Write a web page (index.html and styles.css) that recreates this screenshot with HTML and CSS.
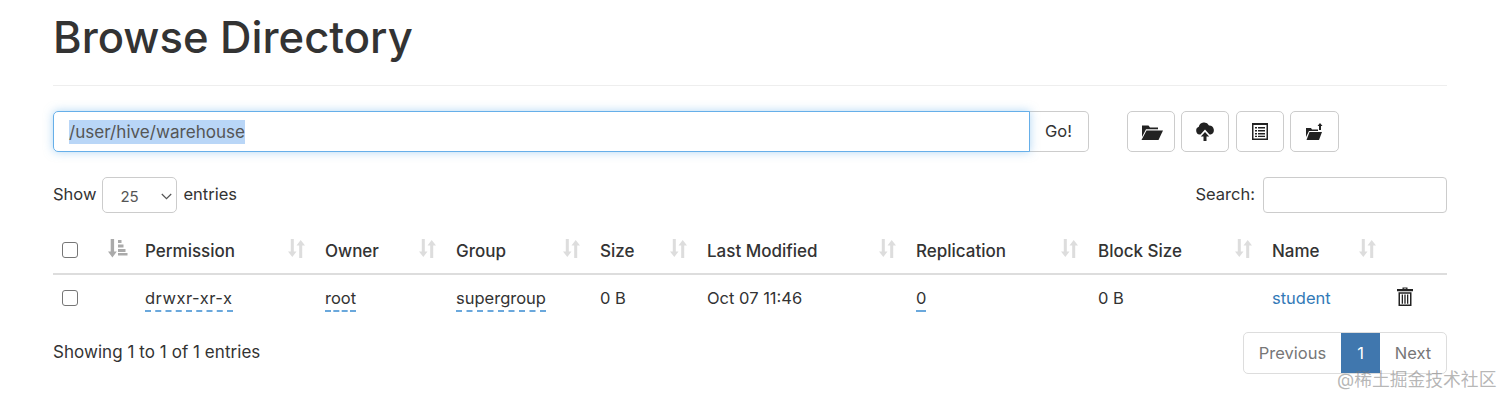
FILE: index.html
```html
<!DOCTYPE html>
<html lang="en">
<head>
<meta charset="utf-8">
<title>Browse Directory</title>
<link rel="stylesheet" href="styles.css">
</head>
<body>
<main class="page">
  <header class="page-header"><h1>Browse Directory</h1></header>

  <div class="toolbar">
    <div class="path-group">
      <div class="path-input"><span class="selected">/user/hive/warehouse</span></div>
      <button class="btn go">Go!</button>
    </div>
    <div class="actions">
      <button class="btn icon-btn w48">
        <svg class="ic nudge" width="22" height="16" viewBox="0 0 22 16"><path d="M1 1.500h6.500l1.500 2H17v1.800H5L1 13z"/><path d="M5.500 6.500H22L17.500 16H0.500z"/></svg>
      </button>
      <button class="btn icon-btn w48">
        <svg class="ic" width="20" height="19" viewBox="0 0 20 19"><path d="M4.500 12.500A4 4 0 0 1 3.800 4.800 5.500 5.500 0 0 1 14 3.400 4.700 4.700 0 0 1 15.800 12.500H14.500L10 7.500 5.500 12.500z"/><path d="M10 10l4.200 4.500H11.500V19h-3v-4.500H5.800z"/></svg>
      </button>
      <button class="btn icon-btn w48 shift">
        <svg class="ic" width="16" height="17" viewBox="0 0 16 17"><path fill-rule="evenodd" d="M0 0h16v17H0zM1.500 2v13.500h13V2z"/><path d="M3 4h2v1.500H3zM6 4h7v1.500H6zM3 7h2v1.500H3zM6 7h7v1.500H6zM3 10h2v1.500H3zM6 10h7v1.500H6zM3 12.800h2v1.200H3zM6 12.800h7v1.200H6z"/></svg>
      </button>
      <button class="btn icon-btn w49">
        <svg class="ic" width="19" height="17" viewBox="0 0 19 17"><path d="M1 5h5l1 1.500h6V8H4L1 14z"/><path d="M4.500 9H17l-3 8H1.500z"/><path d="M15 0l2.500 3H16v4h-2V3h-1.500z"/></svg>
      </button>
    </div>
  </div>

  <div class="controls">
    <div class="length">
      <span>Show</span>
      <div class="select"><span>25</span>
        <svg class="chev" width="11" height="7" viewBox="0 0 11 7"><path d="M0.800 1l4.700 4.700L10.200 1"/></svg>
      </div>
      <span>entries</span>
    </div>
    <div class="search">
      <span>Search:</span>
      <div class="search-input"></div>
    </div>
  </div>

  <table class="grid">
    <thead>
      <tr>
        <th class="c-check"><span class="box"></span>
          <svg class="sort active" width="20" height="19" viewBox="0 0 20 19"><path d="M2.700 0h3.400v12.500h2.700L4.400 18.500 0 12.500h2.700z"/><path d="M10 1h3.500v3H10zM10 5.500h5.500v3H10zM10 10h7.500v3H10zM10 14h9.500v2.500H10z"/></svg>
        </th>
        <th class="c-perm">Permission<svg class="sort" width="17" height="19" viewBox="0 0 17 19"><path d="M2.800 0h3v12.500h2.700L4.300 18 0 12.500h2.800zM11.200 19h3V6.500H17L12.700 1 8.500 6.500h2.700z"/></svg></th>
        <th class="c-owner">Owner<svg class="sort" width="17" height="19" viewBox="0 0 17 19"><path d="M2.800 0h3v12.500h2.700L4.300 18 0 12.500h2.800zM11.200 19h3V6.500H17L12.700 1 8.500 6.500h2.700z"/></svg></th>
        <th class="c-group">Group<svg class="sort" width="17" height="19" viewBox="0 0 17 19"><path d="M2.800 0h3v12.500h2.700L4.300 18 0 12.500h2.800zM11.200 19h3V6.500H17L12.700 1 8.500 6.500h2.700z"/></svg></th>
        <th class="c-size">Size<svg class="sort" width="17" height="19" viewBox="0 0 17 19"><path d="M2.800 0h3v12.500h2.700L4.300 18 0 12.500h2.800zM11.200 19h3V6.500H17L12.700 1 8.500 6.500h2.700z"/></svg></th>
        <th class="c-mod">Last Modified<svg class="sort" width="17" height="19" viewBox="0 0 17 19"><path d="M2.800 0h3v12.500h2.700L4.300 18 0 12.500h2.800zM11.200 19h3V6.500H17L12.700 1 8.500 6.500h2.700z"/></svg></th>
        <th class="c-rep">Replication<svg class="sort" width="17" height="19" viewBox="0 0 17 19"><path d="M2.800 0h3v12.500h2.700L4.300 18 0 12.500h2.800zM11.200 19h3V6.500H17L12.700 1 8.500 6.500h2.700z"/></svg></th>
        <th class="c-block">Block Size<svg class="sort" width="17" height="19" viewBox="0 0 17 19"><path d="M2.800 0h3v12.500h2.700L4.300 18 0 12.500h2.800zM11.200 19h3V6.500H17L12.700 1 8.500 6.500h2.700z"/></svg></th>
        <th class="c-name">Name<svg class="sort" width="17" height="19" viewBox="0 0 17 19"><path d="M2.800 0h3v12.500h2.700L4.300 18 0 12.500h2.800zM11.200 19h3V6.500H17L12.700 1 8.500 6.500h2.700z"/></svg></th>
        <th class="c-del"></th>
      </tr>
    </thead>
    <tbody>
      <tr>
        <td><span class="box"></span></td>
        <td><span class="dotted perm">drwxr-xr-x</span></td>
        <td><span class="dotted">root</span></td>
        <td><span class="dotted">supergroup</span></td>
        <td>0 B</td>
        <td>Oct 07 11:46</td>
        <td><span class="dotted">0</span></td>
        <td>0 B</td>
        <td><span class="link">student</span></td>
        <td>
          <svg class="ic trash" width="16" height="19" viewBox="0 0 16 19"><path d="M5.500 2V.6h5V2H16v2.300H0V2zM6.800 2h2.400V1.500H6.800z"/><path fill-rule="evenodd" d="M1.500 5.300h13V19h-13zM3 6.800V17.500h10V6.800z"/><path d="M4.700 7.500h1.300v9.300H4.700zM7.350 7.500h1.300v9.300h-1.300zM10 7.500h1.300v9.300H10z"/></svg>
        </td>
      </tr>
    </tbody>
  </table>

  <div class="footer-row">
    <div class="info">Showing 1 to 1 of 1 entries</div>
    <div class="pager">
      <span class="pg prev">Previous</span>
      <span class="pg current">1</span>
      <span class="pg next">Next</span>
    </div>
  </div>
</main>
<div class="watermark">@稀土掘金技术社区</div>
</body>
</html>
```

FILE: styles.css
```css
* { box-sizing: border-box; }
html, body { margin: 0; height: 404px; overflow: hidden; background: #fff; }
body {
  font-family: Inter, "Noto Sans CJK SC", sans-serif;
  font-size: 16.500px;
  color: #333;
}
.page { padding: 0 65px 0 53px; }

.page-header { height: 86px; border-bottom: 1px solid #eee; padding-top: 12px; }
.page-header h1 { margin: 0; font-size: 43.600px; line-height: 52px; font-weight: 500; color: #333; }

.toolbar { display: flex; margin-top: 25px; height: 41px; }
.path-group { display: flex; width: 1036px; }
.path-input {
  flex: 1;
  position: relative;
  z-index: 1;
  border: 1px solid #66afe9;
  border-radius: 5px 0 0 5px;
  box-shadow: 0 0 10px rgba(102,175,233,.5);
  padding: 0 15px;
  display: flex;
  align-items: center;
  font-size: 17.100px;
  color: #555;
}
.selected { background: #b9d6f7; line-height: 24px; }
.btn {
  background: #fff;
  border: 1px solid #ccc;
  border-radius: 5px;
  font: inherit;
  color: #333;
  padding: 0;
  display: flex;
  align-items: center;
  justify-content: center;
  height: 41px;
}
.go { width: 60px; margin-left: -1px; border-left: 0; border-radius: 0 5px 5px 0; padding-bottom: 1px; }
.actions { display: flex; margin-left: 38px; gap: 6px; }
.w48 { width: 48px; }
.w49 { width: 49px; }
.shift { margin-left: 1px; }
.nudge { margin-left: 2px; }
.ic { fill: #222; display: block; }

.controls { display: flex; justify-content: space-between; margin-top: 25px; height: 36px; }
.length, .search { display: flex; align-items: center; gap: 6px; }
.search { gap: 8px; }
.length > span, .search > span { position: relative; top: -1px; }
.select {
  width: 75px; height: 36px;
  border: 1px solid #ccc; border-radius: 5px;
  display: flex; align-items: center; justify-content: space-between;
  padding: 2px 4px 0 17px;
  font-size: 15px; color: #555;
}
.chev { fill: none; stroke: #555; stroke-width: 1.200; }
.search-input { width: 184px; height: 36px; border: 1px solid #ccc; border-radius: 4px; }

.grid { width: 1394px; border-collapse: collapse; table-layout: fixed; margin-top: 17px; }
.grid th {
  position: relative;
  height: 44px;
  padding: 0 8px 2px;
  text-align: left;
  font-weight: 500;
  font-size: 17px;
  border-bottom: 2px solid #ddd;
  white-space: nowrap;
}
.grid td { height: 46px; padding: 0 8px; vertical-align: middle; white-space: nowrap; }
.grid th .sort { position: absolute; right: 12px; top: 9px; fill: #ddd; }
.grid th .sort.active { fill: #aaa; right: 9px; top: 9px; }
.c-check { width: 84px; }
.c-perm { width: 180px; }
.c-owner { width: 131px; }
.c-group { width: 144px; }
.c-size { width: 107px; }
.c-mod { width: 209px; }
.c-rep { width: 182px; }
.c-block { width: 174px; }
.c-name { width: 124px; }
.c-del { width: 59px; }
.box {
  display: inline-block; width: 16px; height: 16px;
  border: 1px solid #767676; border-radius: 3px; background: #fff;
  vertical-align: middle; margin-left: 1px;
}
.grid th .box { position: relative; top: -2px; }
.grid td .box { position: relative; top: -1px; }
.dotted { display: inline-block; border-bottom: 2px dashed #6aa8dc; line-height: 22px; padding-bottom: 1px; margin-top: 4px; }
.perm { letter-spacing: .5px; }
.link { color: #337ab7; }
.trash { position: relative; top: -1px; left: 1px; }

.footer-row { display: flex; justify-content: space-between; align-items: center; margin-top: 12px; height: 42px; }
.info { position: relative; top: -1px; font-size: 17px; letter-spacing: .05px; }
.pager { display: flex; height: 42px; width: 204px; border: 1px solid #ddd; border-radius: 5px; overflow: hidden; color: #777; }
.pg { display: flex; align-items: center; justify-content: center; }
.prev { width: 97px; }
.current { width: 39px; background: #4077ae; color: #fff; height: 42px; margin-top: -1px; }
.next { flex: 1; }

.watermark {
  position: absolute; left: 1337px; top: 369px;
  font-size: 17.800px; line-height: 22px;
  color: rgba(120,120,120,.55);
  white-space: nowrap;
}
```
